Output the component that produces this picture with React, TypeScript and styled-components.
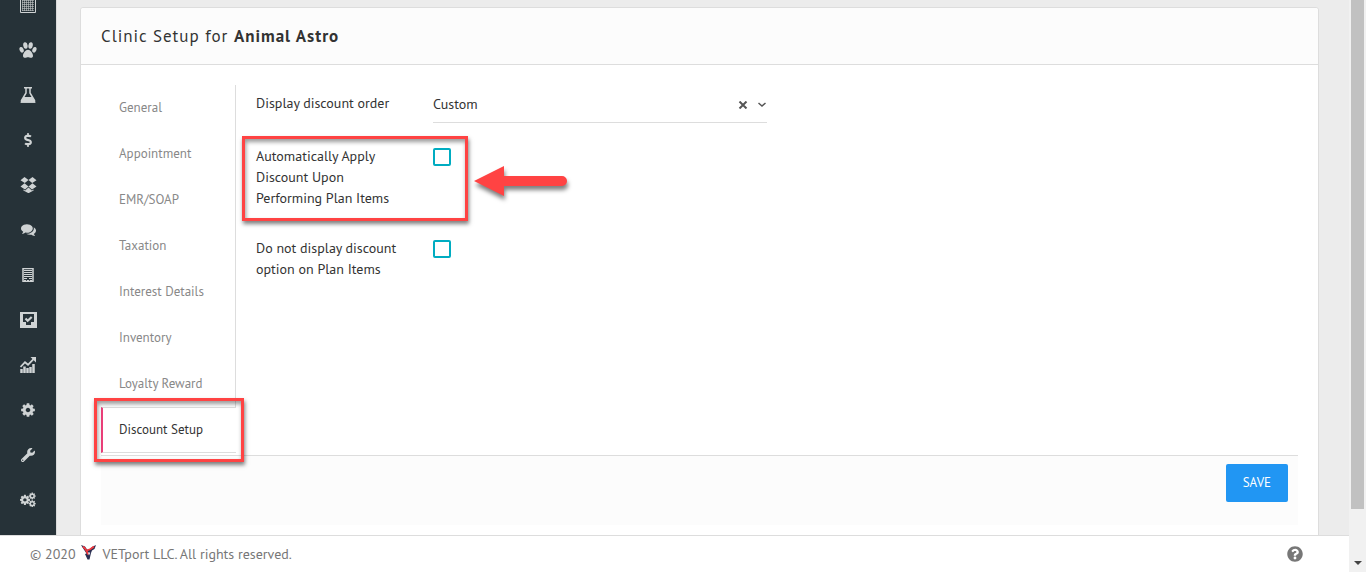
import React, { useState } from "react";
import styled, { createGlobalStyle, css } from "styled-components";
import { FaDollarSign, FaQuestionCircle, FaWrench } from "react-icons/fa";

const GlobalStyle = createGlobalStyle`
  *, *::before, *::after { box-sizing: border-box; }
  html, body { margin: 0; padding: 0; }
  body {
    font-family: "PT Sans", "Noto Sans", "Open Sans", sans-serif;
    font-size: 14px;
    line-height: 21px;
    color: #333;
    background: #ececec;
  }
  button, select, input { font: inherit; color: inherit; }
`;

const Window = styled.div`
  display: flex;
  height: 100vh;
  overflow: hidden;
`;

const Page = styled.div`
  flex: 1;
  min-width: 0;
  display: flex;
  flex-direction: column;
`;

const Body = styled.div`
  flex: 1;
  min-height: 0;
  display: flex;
  overflow: hidden;
`;

const Sidebar = styled.nav`
  flex: none;
  width: 56px;
  background: #263238;
  box-shadow: 1px 0 0 #dadada;
  overflow: hidden;
`;

const SideList = styled.ul`
  list-style: none;
  margin: -18px 0 0;
  padding: 0;
`;

const SideLink = styled.a`
  display: flex;
  align-items: center;
  justify-content: center;
  height: 45px;
  color: #cfd3d4;
`;

const Main = styled.main`
  flex: 1;
  min-width: 0;
  padding: 7px 30px 0 24px;
`;

const Card = styled.section`
  min-height: 560px;
  background: #fff;
  border: 1px solid #ddd;
  border-radius: 3px;
`;

const CardHeader = styled.header`
  padding: 16px 20px;
  background: #fcfcfc;
  border-bottom: 1px solid #ddd;
  border-radius: 3px 3px 0 0;
`;

const Title = styled.h1`
  margin: 0;
  font-size: 17px;
  line-height: 24px;
  font-weight: 400;
  letter-spacing: 1px;
`;

const CardBody = styled.div`
  padding: 20px 20px 0;
`;

const Columns = styled.div`
  display: flex;
`;

const Tabs = styled.ul`
  flex: none;
  width: 135px;
  list-style: none;
  margin: 0;
  padding: 0 0 2px;
`;

const TabItem = styled.li`
  position: relative;
`;

const Tab = styled.a<{ $active?: boolean }>`
  display: block;
  height: 46px;
  padding: 12px 0 0 18px;
  font-size: 13px;
  color: #888;
  text-decoration: none;
  white-space: nowrap;
  border-right: 1px solid #ddd;
  ${(p) =>
    p.$active &&
    css`
      padding: 11px 0 0 16px;
      color: #333;
      border: solid #ddd;
      border-width: 1px 0;
      border-left: 2px solid #ec407a;
    `}
`;

const Form = styled.form`
  flex: 1;
  min-width: 0;
  padding: 8px 20px 0;
`;

const Row = styled.div<{ $gap: number }>`
  position: relative;
  display: flex;
  align-items: flex-start;
  margin-bottom: ${(p) => p.$gap}px;
`;

const Label = styled.label`
  flex: none;
  width: 177px;
  padding-right: 30px;
`;

const SelectBox = styled.div`
  display: flex;
  align-items: center;
  width: 334px;
  height: 30px;
  padding-bottom: 6px;
  border-bottom: 1px solid #ddd;
`;

const Select = styled.select`
  flex: 1;
  appearance: none;
  padding: 0;
  border: 0;
  outline: 0;
  background: transparent;
`;

const IconButton = styled.button`
  display: flex;
  padding: 0;
  margin-right: 9px;
  border: 0;
  background: none;
  color: #555;
`;

const Checkbox = styled.input`
  appearance: none;
  width: 18px;
  height: 18px;
  margin: 2px 0 0;
  border: 2px solid #00acc1;
  border-radius: 2px;
  &:checked {
    background: #00acc1;
  }
`;

const Highlight = styled.div<{ $inset: string }>`
  position: absolute;
  inset: ${(p) => p.$inset};
  border: 3px solid #ff4343;
  box-shadow: 1px 3px 4px rgba(0, 0, 0, 0.5), inset 1px 3px 4px rgba(0, 0, 0, 0.4);
  pointer-events: none;
`;

const HighlightedRow = styled(Row)`
  width: 212px;
`;

const Arrow = styled.svg`
  position: absolute;
  left: 216px;
  top: 15px;
  overflow: visible;
  filter: drop-shadow(1px 4px 2px rgba(0, 0, 0, 0.5));
`;

const Actions = styled.div`
  display: flex;
  justify-content: flex-end;
  align-items: flex-start;
  height: 70px;
  padding: 8px 10px;
  background: #fcfcfc;
  border-top: 1px solid #ddd;
`;

const SaveButton = styled.button`
  height: 38px;
  padding: 0 17px 2px;
  border: 0;
  border-radius: 2px;
  background: #2196f3;
  color: #fff;
  font-size: 13px;
  font-weight: 500;
`;

const Footer = styled.footer`
  flex: none;
  display: flex;
  align-items: center;
  height: 37px;
  padding: 0 46px 0 30px;
  border-top: 1px solid #ddd;
  background: #fff;
  color: #777;
`;

const Brand = styled.svg`
  margin: -4px 7px 0 5px;
`;

const HelpLink = styled.a`
  display: flex;
  margin-left: auto;
  color: #777;
`;

const ScrollTrack = styled.div`
  flex: none;
  display: flex;
  flex-direction: column;
  align-items: center;
  width: 17px;
  background: #f1f1f1;
`;

const ScrollThumb = styled.div`
  width: 13px;
  height: 89%;
  background: #c1c1c1;
`;

const ScrollDown = styled.svg`
  margin-top: auto;
  margin-bottom: 6px;
`;

const Glyph = ({ d, size }: { d: string; size: number }) => (
  <svg width={size} height={size} viewBox="0 0 1792 1792" fill="currentColor">
    <path d={d} />
  </svg>
);

const comments =
  "M1408 768q0 139-94 257t-256.5 186.5-353.5 68.5q-86 0-176-16-124 88-278 128-36 9-86 16h-3q-11 0-20.500-8t-11.500-21q-1-3-1-6.500t.5-6.500 2-6l2.500-5 3.500-5.500 4-5 4.500-5 4-4.500q5-6 23-25t26-29.500 22.500-29 25-38.500 20.500-44q-124-72-195-177t-71-224q0-139 94-257t256.500-186.500 353.500-68.500 353.500 68.500 256.500 186.500 94 257zm384 256q0 120-71 224.500t-195 176.500q10 24 20.500 44t25 38.500 22.500 29 26 29.500 23 25q1 1 4 4.500t4.500 5 4 5 3.500 5.500l2.500 5 2 6 .5 6.500-1 6.500q-3 14-13 22t-22 7q-50-7-86-16-154-40-278-128-90 16-176 16-271 0-472-132 58 4 88 4 161 0 309-45t264-129q125-92 192-212t67-254q0-77-23-152 129 71 204 178t75 230z";

const cog =
  "M1152 896q0-106-75-181t-181-75-181 75-75 181 75 181 181 75 181-75 75-181zm512-109v222q0 12-8 23t-20 13l-185 28q-19 54-39 91 35 50 107 138 10 12 10 25t-9 23q-27 37-99 108t-94 71q-12 0-26-9l-138-108q-44 23-91 38-16 136-29 186-7 28-36 28h-222q-14 0-24.500-8.500t-11.500-21.500l-28-184q-49-16-90-37l-141 107q-10 9-25 9-14 0-25-11-126-114-165-168-7-10-7-23 0-12 8-23 15-21 51-66.500t54-70.500q-27-50-41-99l-183-27q-13-2-21-12.500t-8-23.500v-222q0-12 8-23t19-13l186-28q14-46 39-92-40-57-107-138-10-12-10-24 0-10 9-23 26-36 98.500-107.500t94.500-71.500q13 0 26 10l138 107q44-23 91-38 16-136 29-186 7-28 36-28h222q14 0 24.500 8.500t11.500 21.500l28 184q49 16 90 37l142-107q9-9 24-9 13 0 25 10 129 119 165 170 7 8 7 22 0 12-8 23-15 21-51 66.500t-54 70.500q26 50 41 98l183 28q13 2 21 12.500t8 23.500z";

const DropboxIcon = () => (
  <svg width="17" height="16" viewBox="0 0 17 16" fill="currentColor">
    <path d="M4.500 0L8.500 3 4.800 6 .5 3.300zM12.500 0L8.500 3l3.700 3 4.300-2.700z" />
    <path d="M4.500 6.200L8.500 9.400 5 12.500.5 9.500zM12.500 6.200L8.500 9.400l3.500 3.100 4.500-3z" />
    <path d="M8.500 10.400l3.400 3 1.700-1v1.200L8.500 16.200l-5.100-2.600v-1.200l1.700 1z" />
  </svg>
);

const CogsIcon = () => (
  <svg width="16" height="16" viewBox="0 0 16 16" fill="currentColor">
    <path d={cog} transform="translate(-1 2) scale(.0066)" />
    <path d={cog} transform="translate(8.200 0) scale(.0045)" />
    <path d={cog} transform="translate(8.200 7.600) scale(.0045)" />
  </svg>
);

const PawIcon = () => (
  <svg width="18" height="16" viewBox="0 0 18 16" fill="currentColor">
    <ellipse cx="6.400" cy="3.500" rx="2.200" ry="3.200" transform="rotate(-8 6.400 3.500)" />
    <ellipse cx="11.600" cy="3.500" rx="2.200" ry="3.200" transform="rotate(8 11.600 3.500)" />
    <ellipse cx="2.600" cy="7.800" rx="2" ry="2.900" transform="rotate(-22 2.600 7.800)" />
    <ellipse cx="15.400" cy="7.800" rx="2" ry="2.900" transform="rotate(22 15.400 7.800)" />
    <path d="M9 7.800c2.300 0 5 3.500 5 5.900 0 1.500-.8 2.100-2.100 2.100-1.100 0-1.900-.6-2.900-.6s-1.800.6-2.900.6C4.800 15.800 4 15.200 4 13.700c0-2.400 2.700-5.900 5-5.900z" />
  </svg>
);

const LabIcon = () => (
  <svg width="16" height="16" viewBox="0 0 16 16">
    <path d="M4 .8h8M6 1v5L1.500 13.500v1.500h13v-1.500L10 6V1" fill="none" stroke="currentColor" strokeWidth="1.500" />
    <path d="M3.500 10h9l3 5.700H.500z" fill="currentColor" />
  </svg>
);

const CalendarIcon = () => (
  <svg width="16" height="16" viewBox="0 0 16 16" fill="none" stroke="currentColor">
    <path d="M.5 .5h15v15H.5z" />
    <path
      d="M2 3.500h12M2 5.500h12M2 7.500h12M2 9.500h12M2 11.500h12M2 13.500h12M2.500 3v11M4.500 3v11M6.500 3v11M8.500 3v11M10.500 3v11M12.500 3v11"
      opacity=".55"
    />
  </svg>
);

const BuildingIcon = () => (
  <svg width="12" height="14" viewBox="0 0 12 14" fill="none" stroke="currentColor">
    <path d="M1 .5h10v13H1z" strokeWidth="1.500" />
    <path d="M2 2.500h8M2 4.500h8M2 6.500h8M2 8.500h8M2 10.500h3M7 10.500h3M2 12.500h2M8 12.500h2M5 12.500h2" />
  </svg>
);

const TaskIcon = () => (
  <svg width="17" height="16" viewBox="0 0 17 16">
    <path fill="currentColor" fillRule="evenodd" d="M0 0h17v16H0zM3 2v8h3v3h5v-3h3V2z" />
    <path d="M5.500 6.500l2.200 2.300L11.700 5" fill="none" stroke="currentColor" strokeWidth="2.200" />
  </svg>
);

const ChartIcon = () => (
  <svg width="16" height="16" viewBox="0 0 16 16" fill="none" stroke="currentColor">
    <path d="M1.500 12v4M4.500 9.500V16M7.500 11v5M10.500 10v6M13.500 7v9" strokeWidth="2.500" />
    <path d="M.5 10L5 5.200l3 2.600 5.500-5.600" strokeWidth="1.800" />
    <path d="M10.500 0H16v5.500z" fill="currentColor" stroke="none" />
  </svg>
);

const sideItems: { label: string; icon: React.ReactNode }[] = [
  { label: "Calendar", icon: <CalendarIcon /> },
  { label: "Patients", icon: <PawIcon /> },
  { label: "Laboratory", icon: <LabIcon /> },
  { label: "Billing", icon: <FaDollarSign size={14} /> },
  { label: "Stock", icon: <DropboxIcon /> },
  { label: "Messages", icon: <Glyph d={comments} size={15} /> },
  { label: "Facility", icon: <BuildingIcon /> },
  { label: "Tasks", icon: <TaskIcon /> },
  { label: "Reports", icon: <ChartIcon /> },
  { label: "Settings", icon: <Glyph d={cog} size={16} /> },
  { label: "Tools", icon: <FaWrench size={14} /> },
  { label: "Advanced", icon: <CogsIcon /> },
];

const tabs = [
  "General",
  "Appointment",
  "EMR/SOAP",
  "Taxation",
  "Interest Details",
  "Inventory",
  "Loyalty Reward",
  "Discount Setup",
];

export default function App() {
  const [order, setOrder] = useState("Custom");
  return (
    <>
      <GlobalStyle />
      <Window>
        <Page>
          <Body>
            <Sidebar aria-label="Main">
              <SideList>
                {sideItems.map((item) => (
                  <li key={item.label}>
                    <SideLink href="#" aria-label={item.label}>
                      {item.icon}
                    </SideLink>
                  </li>
                ))}
              </SideList>
            </Sidebar>
            <Main>
              <Card>
                <CardHeader>
                  <Title>
                    Clinic Setup for <b>Animal Astro</b>
                  </Title>
                </CardHeader>
                <CardBody>
                  <Columns>
                    <Tabs>
                      {tabs.map((tab) => {
                        const active = tab === "Discount Setup";
                        return (
                          <TabItem key={tab}>
                            <Tab href="#" $active={active}>
                              {tab}
                            </Tab>
                            {active && <Highlight $inset="-9px -8px -9px -7px" />}
                          </TabItem>
                        );
                      })}
                    </Tabs>
                    <Form>
                      <Row $gap={23}>
                        <Label htmlFor="order">Display discount order</Label>
                        <SelectBox>
                          <Select id="order" value={order} onChange={(e) => setOrder(e.target.value)}>
                            <option value="Custom">Custom</option>
                            <option value="">None</option>
                          </Select>
                          <IconButton type="button" aria-label="Clear" onClick={() => setOrder("")}>
                            <svg width="10" height="8" viewBox="0 0 10 8" fill="none" stroke="currentColor" strokeWidth="2">
                              <path d="M1.500 .500l7 7M8.500 .500l-7 7" />
                            </svg>
                          </IconButton>
                          <svg width="10" height="6" viewBox="0 0 10 6" fill="none" stroke="#555" strokeWidth="1.500">
                            <path d="M1.500 1L5 4 8.500 1" />
                          </svg>
                        </SelectBox>
                      </Row>
                      <HighlightedRow $gap={29}>
                        <Label htmlFor="auto">Automatically Apply Discount Upon Performing Plan Items</Label>
                        <Checkbox id="auto" type="checkbox" />
                        <Highlight $inset="-10px 0 -12px -14px" />
                        <Arrow width="95" height="32" viewBox="0 0 95 32" fill="#ff4343" aria-hidden="true">
                          <path d="M2 20L32 5v10h58a5 5 0 0 1 0 10H32v10z" />
                        </Arrow>
                      </HighlightedRow>
                      <Row $gap={0}>
                        <Label htmlFor="hide">Do not display discount option on Plan Items</Label>
                        <Checkbox id="hide" type="checkbox" />
                      </Row>
                    </Form>
                  </Columns>
                  <Actions>
                    <SaveButton type="button">SAVE</SaveButton>
                  </Actions>
                </CardBody>
              </Card>
            </Main>
          </Body>
          <Footer>
            <span>© 2020</span>
            <Brand width="15" height="15" viewBox="0 0 15 15" aria-hidden="true">
              <path d="M0 0l4 1.500 2 3h3L11 2l4-2-1.500 4-2.500 1.500L10 8 8.500 14.500h-2L4 9l1.500-.5L2.500 4z" fill="#2b2f52" />
              <path d="M2 1.500L4.500 4l2.800 5.500M13 1.500L9.500 4 6 5.500" fill="none" stroke="#f0383f" strokeWidth="1.800" />
              <path d="M7 7.500l1 3 1.200-3z" fill="#fff" />
            </Brand>
            <span>VETport LLC. All rights reserved.</span>
            <HelpLink href="#" aria-label="Help">
              <FaQuestionCircle size={16} />
            </HelpLink>
          </Footer>
        </Page>
        <ScrollTrack aria-hidden="true">
          <ScrollThumb />
          <ScrollDown width="8" height="5" viewBox="0 0 8 5">
            <path d="M0 0h8L4 4z" fill="#444" />
          </ScrollDown>
        </ScrollTrack>
      </Window>
    </>
  );
}
